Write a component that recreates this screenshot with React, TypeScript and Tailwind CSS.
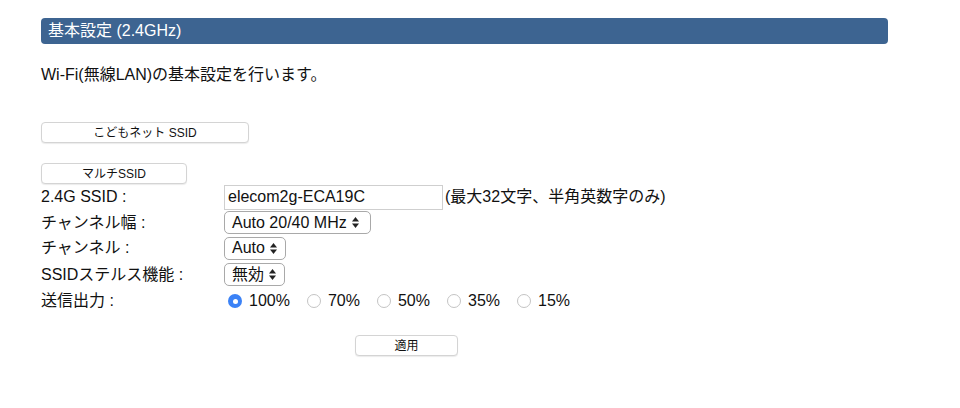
const font = { fontFamily: '"Liberation Sans", "Noto Sans CJK JP", sans-serif' };

function Arrows() {
  return (
    <svg width="9" height="13" viewBox="0 0 9 13" className="ml-1">
      <path d="M4.5 1 L8 5.5 L1 5.5 Z" fill="#222" />
      <path d="M4.5 12 L8 7.5 L1 7.5 Z" fill="#222" />
    </svg>
  );
}

function Select({ value, width }: { value: string; width: string }) {
  return (
    <div
      className={`flex h-[23px] ${width} items-center rounded-[5px] border border-[#a9a9a9] bg-white pl-[7px] pr-[4px] text-[16px] text-[#111]`}
    >
      <span className="leading-none">{value}</span>
      <Arrows />
    </div>
  );
}

function Radio({ label, checked }: { label: string; checked?: boolean }) {
  return (
    <div className="mr-[17px] flex items-center">
      {checked ? (
        <span className="flex h-[14px] w-[14px] items-center justify-center rounded-full bg-[#3b82f6]">
          <span className="h-[5px] w-[5px] rounded-full bg-white" />
        </span>
      ) : (
        <span className="h-[14px] w-[14px] rounded-full border border-[#c4c4c4] bg-white" />
      )}
      <span className="ml-[7px] text-[16px] text-[#111]">{label}</span>
    </div>
  );
}

function Btn({ label, width }: { label: string; width: string }) {
  return (
    <div
      className={`flex h-[21px] ${width} items-center justify-center rounded-[4px] border border-[#d4d4d4] bg-white text-[12px] text-[#111] shadow-[0_1px_1px_rgba(0,0,0,0.08)]`}
    >
      {label}
    </div>
  );
}

export default function App() {
  const rows = [
    { label: "2.4G SSID :", h: "h-[26px]" },
    { label: "チャンネル幅 :", h: "h-[25px]" },
    { label: "チャンネル :", h: "h-[26px]" },
    { label: "SSIDステルス機能 :", h: "h-[27px]" },
    { label: "送信出力 :", h: "h-[26px]" },
  ];

  return (
    <div className="h-[408px] w-[960px] bg-white text-[#111]" style={font}>
      <div className="pl-[41px] pt-[18px]">
        <div className="flex h-[26px] w-[847px] items-center rounded-[4px] bg-[#3d6491] pl-[7px] text-[16px] text-white">
          基本設定 (2.4GHz)
        </div>

        <p className="mt-[21px] text-[16px] leading-[20px]">
          Wi-Fi(無線LAN)の基本設定を行います。
        </p>

        <div className="mt-[37px]">
          <Btn label="こどもネット SSID" width="w-[208px]" />
        </div>
        <div className="mt-[20px]">
          <Btn label="マルチSSID" width="w-[146px]" />
        </div>

        <div className="flex flex-col">
          {rows.map((row, i) => (
            <div key={row.label} className={`flex ${row.h} items-center`}>
              <div className="w-[183px] text-[16px]">{row.label}</div>
              {i === 0 && (
                <div className="flex items-center">
                  <div className="flex h-[25px] w-[219px] items-center border border-[#cfcfcf] bg-white pl-[3px] text-[16px]">
                    elecom2g-ECA19C
                  </div>
                  <span className="ml-[2px] text-[16px]">(最大32文字、半角英数字のみ)</span>
                </div>
              )}
              {i === 1 && <Select value="Auto 20/40 MHz" width="w-[147px]" />}
              {i === 2 && <Select value="Auto" width="w-[62px]" />}
              {i === 3 && <Select value="無効" width="w-[61px]" />}
              {i === 4 && (
                <div className="ml-[4px] flex items-center">
                  <Radio label="100%" checked />
                  <Radio label="70%" />
                  <Radio label="50%" />
                  <Radio label="35%" />
                  <Radio label="15%" />
                </div>
              )}
            </div>
          ))}
        </div>

        <div className="mt-[21px] pl-[314px]">
          <Btn label="適用" width="w-[103px]" />
        </div>
      </div>
    </div>
  );
}
